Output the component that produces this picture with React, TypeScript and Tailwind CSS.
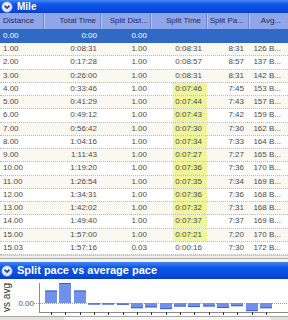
import React from "react";

type Row = [string, string, string, string, string, string];

const rows: Row[] = [
  ["1.00", "0:08:31", "1.00", "0:08:31", "8:31", "126 B..."],
  ["2.00", "0:17:28", "1.00", "0:08:57", "8:57", "137 B..."],
  ["3.00", "0:26:00", "1.00", "0:08:31", "8:31", "142 B..."],
  ["4.00", "0:33:46", "1.00", "0:07:46", "7:45", "153 B..."],
  ["5.00", "0:41:29", "1.00", "0:07:44", "7:43", "157 B..."],
  ["6.00", "0:49:12", "1.00", "0:07:43", "7:42", "159 B..."],
  ["7.00", "0:56:42", "1.00", "0:07:30", "7:30", "162 B..."],
  ["8.00", "1:04:16", "1.00", "0:07:34", "7:33", "164 B..."],
  ["9.00", "1:11:43", "1.00", "0:07:27", "7:27", "165 B..."],
  ["10.00", "1:19:20", "1.00", "0:07:36", "7:36", "170 B..."],
  ["11.00", "1:26:54", "1.00", "0:07:35", "7:34", "169 B..."],
  ["12.00", "1:34:31", "1.00", "0:07:36", "7:36", "168 B..."],
  ["13.00", "1:42:02", "1.00", "0:07:32", "7:31", "168 B..."],
  ["14.00", "1:49:40", "1.00", "0:07:37", "7:37", "169 B..."],
  ["15.00", "1:57:00", "1.00", "0:07:21", "7:20", "170 B..."],
  ["15.03", "1:57:16", "0.03", "0:00:16", "7:30", "172 B..."],
];

function TitleBar({ title, h, size }: { title: string; h: string; size: string }) {
  return (
    <div
      className={`${h} flex items-center bg-[linear-gradient(to_bottom,#4586f2,#0a55e8_35%,#0848d8_85%,#0a3cb8)]`}
    >
      <svg width="12" height="12" viewBox="0 0 12 12" className="ml-[1px] mr-[4px] shrink-0">
        <defs>
          <radialGradient id={`g-${title.length}`} cx="0.4" cy="0.35" r="0.7">
            <stop offset="0" stopColor="#ffffff" />
            <stop offset="1" stopColor="#c6d4f6" />
          </radialGradient>
        </defs>
        <circle cx="6" cy="6" r="5.3" fill={`url(#g-${title.length})`} stroke="#7f9ce0" strokeWidth="0.6" />
        <path d="M3.6 4.6 L6 7 L8.4 4.6" fill="none" stroke="#1f3f9e" strokeWidth="1.7" />
      </svg>
      <span className={`${size} font-bold text-white leading-none`}>{title}</span>
    </div>
  );
}

function Chart() {
  const paces = ["8:31", "8:57", "8:31", "7:45", "7:43", "7:42", "7:30", "7:33", "7:27", "7:36", "7:34", "7:36", "7:31", "7:37", "7:20", "7:30"];
  const avg = 468;
  const base = 24;
  return (
    <svg width="288" height="41" viewBox="0 0 288 41" className="block">
      <rect x="0" y="0" width="288" height="41" fill="#ffffff" />
      <text
        x="9.5"
        y="4"
        transform="rotate(-90 9.5 4)"
        textAnchor="end"
        fontSize="10"
        fill="#333"
        fontFamily="Liberation Sans, sans-serif"
      >
        vs avg
      </text>
      <text x="34" y="27" textAnchor="end" fontSize="8" fill="#555" fontFamily="Liberation Sans, sans-serif">
        0.00
      </text>
      <line x1="34" y1="24.5" x2="288" y2="24.5" stroke="#9a9a9a" strokeWidth="1" strokeDasharray="1 1" />
      {paces.map((p, i) => {
        const [m, s] = p.split(":").map(Number);
        const d = (m * 60 + s - avg) * 0.29;
        const x = Math.round(45 + i * 14.33);
        const hgt = Math.max(Math.abs(d), 1.5);
        const y = d > 0 ? base - hgt : base;
        return (
          <g key={i}>
            <rect x={x} y={y} width="12" height={hgt} fill="#7090ea" />
            <rect x={x} y={d > 0 ? y : y + hgt - 1} width="12" height="1" fill="#3a62dc" />
          </g>
        );
      })}
      <line x1="39.5" y1="4" x2="39.5" y2="34" stroke="#8a8a8a" strokeWidth="1" />
      <line x1="39" y1="33.5" x2="288" y2="33.5" stroke="#8a8a8a" strokeWidth="1" />
      {paces.map((_, i) => {
        const cx = Math.round(45 + i * 14.33) + 6.5;
        return <line key={i} x1={cx} y1="33" x2={cx} y2="36" stroke="#333" strokeWidth="1" />;
      })}
      <rect x="0" y="37" width="288" height="4" fill="#e4e2da" />
      <line x1="0" y1="37.5" x2="288" y2="37.5" stroke="#a8a8a8" strokeWidth="1" />
      <rect x="64" y="38" width="206" height="3" fill="#f6f6f6" />
    </svg>
  );
}

const colW = ["w-[44px]", "w-[57px]", "w-[50px]", "w-[56px]", "w-[42px]", "w-[39px]"];

export default function App() {
  return (
    <div className="w-[288px] h-[320px] overflow-hidden bg-white font-['Liberation_Sans',Arial,sans-serif]">
      <TitleBar title="Mile" h="h-[13px]" size="text-[10px]" />
      {/* header */}
      <div className="h-[16px] flex bg-[#8fa7ea] text-[8px] text-[#1e2a55]">
        <div className={`${colW[0]} flex items-center pl-[3px] border-r border-r-[#6d86d4] shadow-[1px_0_0_#b4c4f2]`}>Distance</div>
        <div className={`${colW[1]} flex items-center justify-end pr-[4px] border-r border-r-[#6d86d4] shadow-[1px_0_0_#b4c4f2]`}>Total Time</div>
        <div className={`${colW[2]} flex items-center justify-end pr-[2px] border-r border-r-[#6d86d4] shadow-[1px_0_0_#b4c4f2] whitespace-nowrap overflow-hidden`}>Split Dist...</div>
        <div className={`${colW[3]} flex items-center justify-end pr-[5px] border-r border-r-[#6d86d4] shadow-[1px_0_0_#b4c4f2]`}>Split Time</div>
        <div className={`${colW[4]} flex items-center justify-end pr-[4px] border-r border-r-[#6d86d4] shadow-[1px_0_0_#b4c4f2] whitespace-nowrap`}>Split Pa...</div>
        <div className={`${colW[5]} flex items-center justify-end pr-[7px]`}>Avg...</div>
      </div>
      {/* selected row */}
      <div className="h-[14px] flex bg-[#316ac6] text-[8px] text-white">
        <div className={`${colW[0]} flex items-center pl-[3px]`}>0.00</div>
        <div className={`${colW[1]} flex items-center justify-end pr-[4px]`}>0:00</div>
        <div className={`${colW[2]} flex items-center justify-end pr-[4px]`}>0.00</div>
        <div className={colW[3]} />
        <div className={colW[4]} />
        <div className={colW[5]} />
      </div>
      {rows.map((r, i) => {
        const hl = i >= 3 && i <= 14;
        return (
          <div
            key={i}
            className={`h-[13.25px] flex text-[8px] text-[#4a4a4a] border-b border-dotted border-b-[#b8b8b8] ${
              i % 2 === 0 ? "bg-[#faf8f1]" : "bg-white"
            }`}
          >
            <div className={`${colW[0]} flex items-center pl-[3px]`}>{r[0]}</div>
            <div className={`${colW[1]} flex items-center justify-end pr-[4px]`}>{r[1]}</div>
            <div className={`${colW[2]} flex items-center justify-end pr-[4px]`}>{r[2]}</div>
            <div className={`${colW[3]} flex justify-end`}>
              <span className={`flex items-center pl-[2px] pr-[5px] ${hl ? "bg-[#eff59a]" : ""}`}>{r[3]}</span>
            </div>
            <div className={`${colW[4]} flex items-center justify-end pr-[5px]`}>{r[4]}</div>
            <div className={`${colW[5]} flex items-center justify-end pr-[7px] whitespace-nowrap`}>{r[5]}</div>
          </div>
        );
      })}
      {/* splitter */}
      <div className="h-[7px] bg-[#f2f1ec] border-t border-t-[#d0d0d0]">
        <div className="mt-[2px] h-px bg-[#a9a9a9]" />
      </div>
      <TitleBar title="Split pace vs average pace" h="h-[17px]" size="text-[11px]" />
      <Chart />
    </div>
  );
}
